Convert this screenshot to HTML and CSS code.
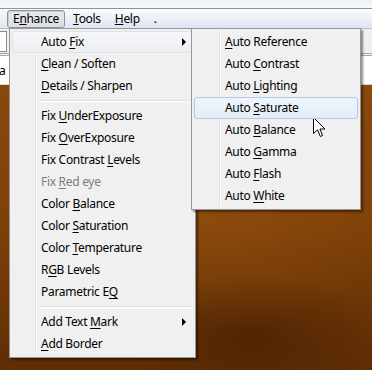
FILE: index.html
```html
<!DOCTYPE html>
<html lang="en">
<head>
    <meta charset="UTF-8">
    <meta name="viewport" content="width=device-width, initial-scale=1.0">
    <title>Enhance menu</title>
    <link rel="stylesheet" href="styles.css">
</head>
<body>
    <div class="titlebar"></div>
    <div class="menubar">
        <span class="menubar-item open">E<u>n</u>hance</span>
        <span class="menubar-item"><u>T</u>ools</span>
        <span class="menubar-item"><u>H</u>elp</span>
        <span class="menubar-item">.</span>
    </div>

    <div class="workspace">
        <div class="toolbar">
            <div class="tool-box"></div>
        </div>
        <div class="docstrip"><span class="doc-text">a</span></div>
        <div class="desktop"></div>
    </div>

    <!-- Enhance dropdown -->
    <ul class="menu main-menu">
        <li class="item hot has-sub">Auto <u>F</u>ix</li>
        <li class="item"><u>C</u>lean / Soften</li>
        <li class="item"><u>D</u>etails / Sharpen</li>
        <li class="sep"></li>
        <li class="item">Fix <u>U</u>nderExposure</li>
        <li class="item">Fix <u>O</u>verExposure</li>
        <li class="item">Fix Contrast <u>L</u>evels</li>
        <li class="item disabled">Fix <u>R</u>ed eye</li>
        <li class="item">Color <u>B</u>alance</li>
        <li class="item">Color <u>S</u>aturation</li>
        <li class="item">Color <u>T</u>emperature</li>
        <li class="item">R<u>G</u>B Levels</li>
        <li class="item">Parametric E<u>Q</u></li>
        <li class="sep"></li>
        <li class="item has-sub">Add Text <u>M</u>ark</li>
        <li class="item"><u>A</u>dd Border</li>
    </ul>

    <!-- Auto Fix submenu -->
    <ul class="menu sub-menu">
        <li class="item"><u>A</u>uto Reference</li>
        <li class="item">Auto <u>C</u>ontrast</li>
        <li class="item">Auto <u>L</u>ighting</li>
        <li class="item selected">Auto <u>S</u>aturate</li>
        <li class="item">Auto <u>B</u>alance</li>
        <li class="item">Auto <u>G</u>amma</li>
        <li class="item">Auto <u>F</u>lash</li>
        <li class="item">Auto <u>W</u>hite</li>
    </ul>

    <svg class="cursor" width="13" height="21" viewBox="0 0 13 21">
        <path d="M0.5 0.5 L0.5 16.5 L4.5 12.8 L7.3 19.5 L9.6 18.5 L6.9 12 L12 12 Z" fill="#fff" stroke="#000" stroke-width="1" stroke-linejoin="miter"/>
    </svg>
</body>
</html>
```

FILE: styles.css
```css
body {
    margin: 0;
    width: 372px;
    height: 370px;
    overflow: hidden;
    font-family: "Noto Sans", "Open Sans", sans-serif;
    font-size: 12px;
    letter-spacing: -0.3px;
    color: #000;
    position: relative;
    background: #6e3606;
}
.titlebar {
    height: 8px;
    background: linear-gradient(#eef1f5, #f7f9fb);
    border-bottom: 1px solid #8e939a;
}
.menubar {
    height: 18px;
    padding: 1px 0 0 7px;
    display: flex;
    align-items: stretch;
    background: linear-gradient(#fbfcfe 0%, #eef2f8 40%, #dce5f1 100%);
    border-bottom: 1px solid #b6bcc6;
}
.menubar-item {
    padding: 0 5px;
    margin-right: 2px;
    line-height: 16px;
    border: 1px solid transparent;
    border-radius: 3px;
}
.menubar-item.open {
    border-color: #8b929c;
    background: linear-gradient(#e6e9ee, #dadee5);
    box-shadow: inset 1px 1px 0 #c9ced6;
}

.workspace {
    display: flex;
    flex-direction: column;
    height: 342px;
}
.toolbar {
    height: 27px;
    background: #f0f0f0;
    border-bottom: 3px double #a9a9a9;
    padding: 2px 0 0 0;
    box-sizing: border-box;
}
.tool-box {
    width: 6px;
    height: 19px;
    border: 1px solid #8c8c8c;
    border-left: none;
    background: #fff;
}
.docstrip {
    height: 28px;
    background: #fff;
    border-bottom: 1px solid #d8d8d8;
    position: relative;
}
.doc-text {
    position: absolute;
    left: -1px;
    top: 6px;
}
.desktop {
    flex: 1;
    background:
        radial-gradient(ellipse 140px 60px at 250px 250px, rgba(40, 15, 0, 0.35), rgba(40, 15, 0, 0)),
        radial-gradient(ellipse 200px 130px at 200px 120px, rgba(170, 95, 20, 0.35), rgba(170, 95, 20, 0)),
        linear-gradient(180deg, #89490d 0%, #7e4009 50%, #5f2d04 100%);
}

.menu {
    position: absolute;
    margin: 0;
    padding: 2px;
    list-style: none;
    background: #f0f0f0;
    border: 1px solid #979797;
    box-shadow: 2px 2px 2px rgba(0, 0, 0, 0.45);
}
.main-menu {
    left: 9px;
    top: 28px;
    width: 181px;
}
.sub-menu {
    left: 191px;
    top: 28px;
    width: 164px;
}
.menu::before {
    content: "";
    position: absolute;
    top: 2px;
    bottom: 2px;
    width: 1px;
    background: #e2e3e3;
    border-right: 1px solid #fff;
}
.main-menu::before {
    left: 25px;
}
.sub-menu::before {
    left: 27px;
}
.item {
    position: relative;
    height: 20px;
    line-height: 20px;
    border: 1px solid transparent;
    border-radius: 3px;
    white-space: nowrap;
}
.main-menu .item {
    padding-left: 28px;
}
.sub-menu .item {
    padding-left: 30px;
}
.item u {
    text-decoration-thickness: 1px;
    text-underline-offset: 2px;
}
.item.disabled {
    color: #7c7c7c;
}
.item.hot {
    border-color: #dfe3e8;
    background: linear-gradient(#f6f7f9, #eceef1);
}
.item.selected {
    border-color: #aecbe9;
    background: linear-gradient(#f0f5fb, #e3ecf6);
    z-index: 1;
}
.has-sub::after {
    content: "";
    position: absolute;
    right: 6px;
    top: 6px;
    border-left: 4px solid #000;
    border-top: 4px solid transparent;
    border-bottom: 4px solid transparent;
}
.sep {
    height: 1px;
    margin: 3px 0 3px 27px;
    background: #e0e0e0;
    border-bottom: 1px solid #fff;
}

.cursor {
    position: absolute;
    left: 313px;
    top: 117px;
}
```
